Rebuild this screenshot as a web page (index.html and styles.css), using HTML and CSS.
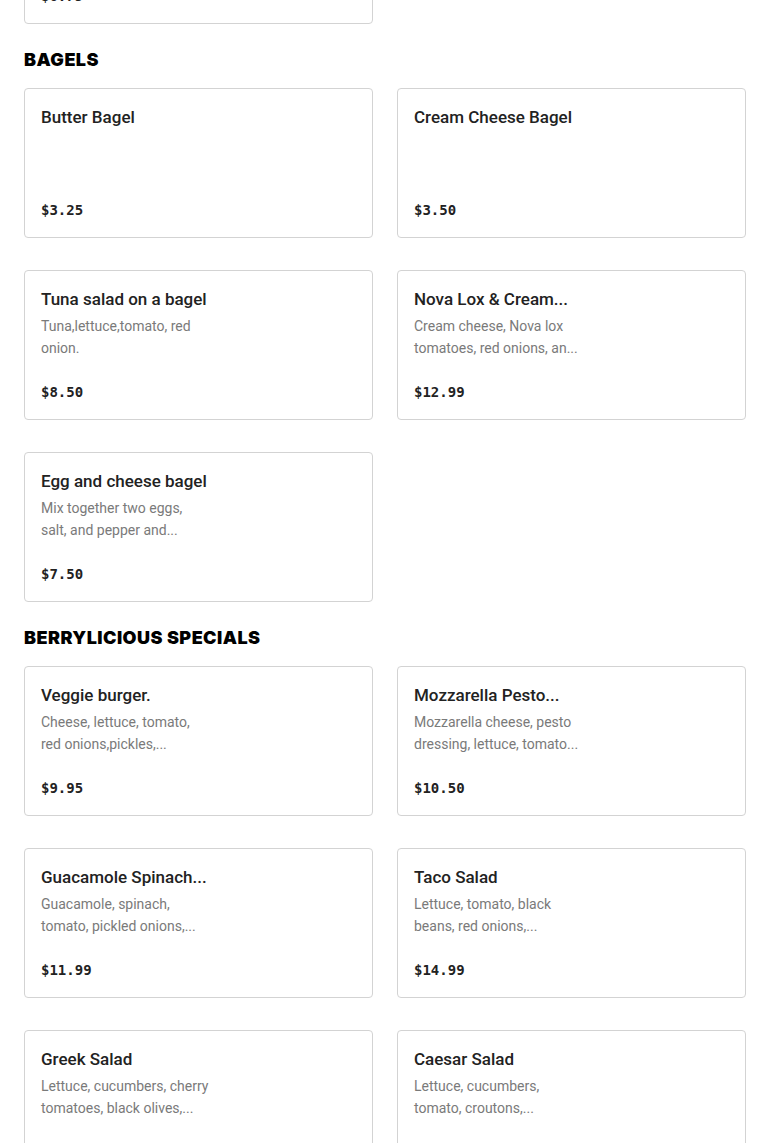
FILE: index.html
```html
<!DOCTYPE html>
<html lang="en">
<head>
<meta charset="utf-8">
<title>Menu</title>
<link rel="stylesheet" href="styles.css">
</head>
<body>
<main class="menu">
  <section class="section section-prev">
    <div class="grid">
      <article class="card">
        <p class="price">$6.75</p>
      </article>
    </div>
  </section>

  <section class="section">
    <h2 class="section-title">BAGELS</h2>
    <div class="grid">
      <article class="card">
        <h3 class="item-name">Butter Bagel</h3>
        <p class="price">$3.25</p>
      </article>
      <article class="card">
        <h3 class="item-name">Cream Cheese Bagel</h3>
        <p class="price">$3.50</p>
      </article>
      <article class="card">
        <h3 class="item-name">Tuna salad on a bagel</h3>
        <p class="item-desc"><span>Tuna,lettuce,tomato, red</span><span>onion.</span></p>
        <p class="price">$8.50</p>
      </article>
      <article class="card">
        <h3 class="item-name">Nova Lox &amp; Cream...</h3>
        <p class="item-desc"><span>Cream cheese, Nova lox</span><span>tomatoes, red onions, an...</span></p>
        <p class="price">$12.99</p>
      </article>
      <article class="card">
        <h3 class="item-name">Egg and cheese bagel</h3>
        <p class="item-desc"><span>Mix together two eggs,</span><span>salt, and pepper and...</span></p>
        <p class="price">$7.50</p>
      </article>
    </div>
  </section>

  <section class="section">
    <h2 class="section-title">BERRYLICIOUS SPECIALS</h2>
    <div class="grid">
      <article class="card">
        <h3 class="item-name">Veggie burger.</h3>
        <p class="item-desc"><span>Cheese, lettuce, tomato,</span><span>red onions,pickles,...</span></p>
        <p class="price">$9.95</p>
      </article>
      <article class="card">
        <h3 class="item-name">Mozzarella Pesto...</h3>
        <p class="item-desc"><span>Mozzarella cheese, pesto</span><span>dressing, lettuce, tomato...</span></p>
        <p class="price">$10.50</p>
      </article>
      <article class="card">
        <h3 class="item-name">Guacamole Spinach...</h3>
        <p class="item-desc"><span>Guacamole, spinach,</span><span>tomato, pickled onions,...</span></p>
        <p class="price">$11.99</p>
      </article>
      <article class="card">
        <h3 class="item-name">Taco Salad</h3>
        <p class="item-desc"><span>Lettuce, tomato, black</span><span>beans, red onions,...</span></p>
        <p class="price">$14.99</p>
      </article>
      <article class="card">
        <h3 class="item-name">Greek Salad</h3>
        <p class="item-desc"><span>Lettuce, cucumbers, cherry</span><span>tomatoes, black olives,...</span></p>
        <p class="price">$12.99</p>
      </article>
      <article class="card">
        <h3 class="item-name">Caesar Salad</h3>
        <p class="item-desc"><span>Lettuce, cucumbers,</span><span>tomato, croutons,...</span></p>
        <p class="price">$11.99</p>
      </article>
    </div>
  </section>
</main>
</body>
</html>
```

FILE: styles.css
```css
html, body {
  margin: 0;
  padding: 0;
  background: #ffffff;
}

body {
  font-family: Roboto, "Liberation Sans", Arial, sans-serif;
  color: #222222;
  overflow: hidden;
}

.menu {
  padding: 0 24px;
  margin-top: -126px;
  display: flex;
  flex-direction: column;
}

.section {
  display: flex;
  flex-direction: column;
}

.section-title {
  margin: 24px 0 16px;
  font-family: Inter, "Liberation Sans", Arial, sans-serif;
  font-weight: 900;
  font-size: 18px;
  line-height: 24px;
  letter-spacing: 0.45px;
  color: #000000;
}

.grid {
  display: grid;
  grid-template-columns: 1fr 1fr;
  column-gap: 24px;
  row-gap: 32px;
}

.card {
  box-sizing: border-box;
  height: 150px;
  border: 1px solid #d3d3d3;
  border-radius: 4px;
  padding: 16px;
  display: flex;
  flex-direction: column;
  background: #ffffff;
}

.item-name {
  margin: 0;
  font-size: 17px;
  line-height: 24px;
  font-weight: 500;
  color: #222222;
  white-space: nowrap;
}

.item-desc {
  margin: 4px 0 0;
  font-size: 14px;
  line-height: 22px;
  color: #7a7a7a;
  display: flex;
  flex-direction: column;
}

.price {
  margin: auto 0 1px;
  font-family: "DejaVu Sans Mono", "Liberation Mono", monospace;
  font-weight: 700;
  font-size: 14px;
  line-height: 20px;
  color: #222222;
}
```
